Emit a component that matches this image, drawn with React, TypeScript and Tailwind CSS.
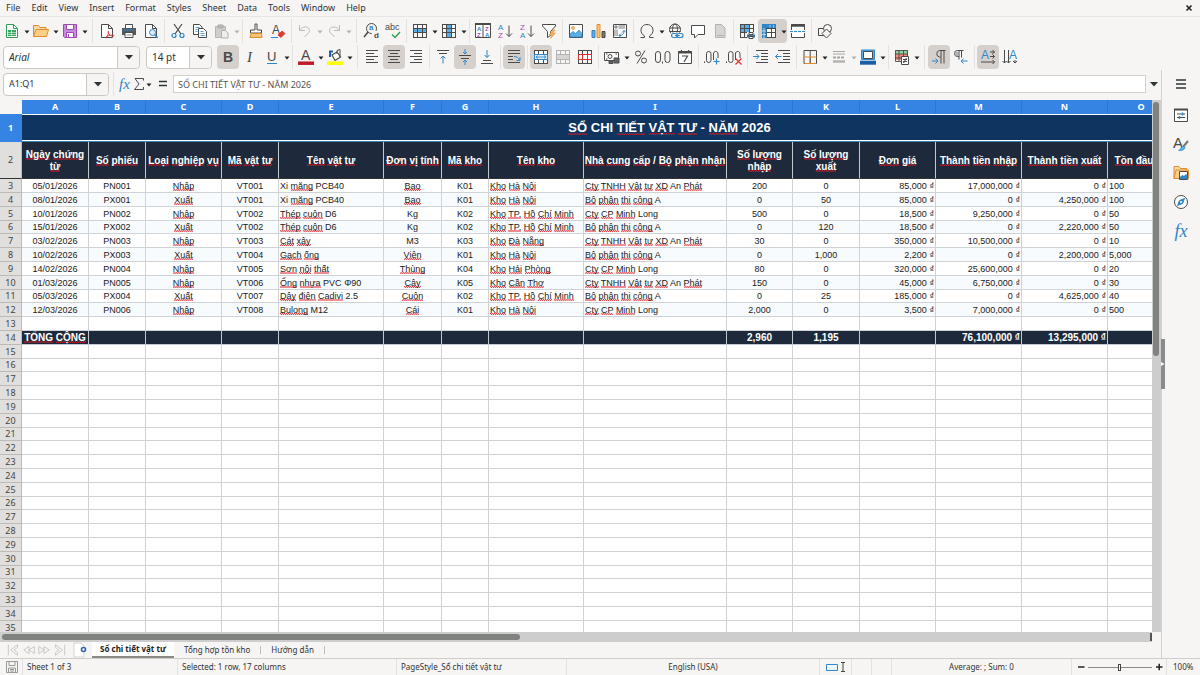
import { Fragment, ReactNode, useState } from "react";

const INK = "#4a4a4a";
const BLUE = "#2f86c8";

const menus = ["File", "Edit", "View", "Insert", "Format", "Styles", "Sheet", "Data", "Tools", "Window", "Help"];

const columns = [
  { letter: "A", width: "w-[67px]", title: "Ngày chứng từ", align: "text-center" },
  { letter: "B", width: "w-[57px]", title: "Số phiếu", align: "text-center" },
  { letter: "C", width: "w-[76px]", title: "Loại nghiệp vụ", align: "text-center" },
  { letter: "D", width: "w-[57px]", title: "Mã vật tư", align: "text-center" },
  { letter: "E", width: "w-[105px]", title: "Tên vật tư", align: "text-left" },
  { letter: "F", width: "w-[58px]", title: "Đơn vị tính", align: "text-center" },
  { letter: "G", width: "w-[47px]", title: "Mã kho", align: "text-center" },
  { letter: "H", width: "w-[95px]", title: "Tên kho", align: "text-left" },
  { letter: "I", width: "w-[143px]", title: "Nhà cung cấp / Bộ phận nhận", align: "text-left" },
  { letter: "J", width: "w-[66px]", title: "Số lượng nhập", align: "text-center" },
  { letter: "K", width: "w-[67px]", title: "Số lượng xuất", align: "text-center" },
  { letter: "L", width: "w-[76px]", title: "Đơn giá", align: "text-right" },
  { letter: "M", width: "w-[86px]", title: "Thành tiền nhập", align: "text-right" },
  { letter: "N", width: "w-[86px]", title: "Thành tiền xuất", align: "text-right" },
  { letter: "O", width: "w-[67px]", title: "Tồn đầu kỳ", align: "text-left" },
  { letter: "P", width: "w-[71px]", title: "", align: "text-left" },
  { letter: "Q", width: "w-[71px]", title: "", align: "text-left" },
];

const records = [
  ["05/01/2026", "PN001", "Nhập", "VT001", "Xi măng PCB40", "Bao", "K01", "Kho Hà Nội", "Cty TNHH Vật tư XD An Phát", "200", "0", "85,000 ₫", "17,000,000 ₫", "0 ₫", "100"],
  ["08/01/2026", "PX001", "Xuất", "VT001", "Xi măng PCB40", "Bao", "K01", "Kho Hà Nội", "Bộ phận thi công A", "0", "50", "85,000 ₫", "0 ₫", "4,250,000 ₫", "100"],
  ["10/01/2026", "PN002", "Nhập", "VT002", "Thép cuộn D6", "Kg", "K02", "Kho TP. Hồ Chí Minh", "Cty CP Minh Long", "500", "0", "18,500 ₫", "9,250,000 ₫", "0 ₫", "50"],
  ["15/01/2026", "PX002", "Xuất", "VT002", "Thép cuộn D6", "Kg", "K02", "Kho TP. Hồ Chí Minh", "Bộ phận thi công A", "0", "120", "18,500 ₫", "0 ₫", "2,220,000 ₫", "50"],
  ["03/02/2026", "PN003", "Nhập", "VT003", "Cát xây", "M3", "K03", "Kho Đà Nẵng", "Cty TNHH Vật tư XD An Phát", "30", "0", "350,000 ₫", "10,500,000 ₫", "0 ₫", "10"],
  ["10/02/2026", "PX003", "Xuất", "VT004", "Gạch ống", "Viên", "K01", "Kho Hà Nội", "Bộ phận thi công A", "0", "1,000", "2,200 ₫", "0 ₫", "2,200,000 ₫", "5,000"],
  ["14/02/2026", "PN004", "Nhập", "VT005", "Sơn nội thất", "Thùng", "K04", "Kho Hải Phòng", "Cty CP Minh Long", "80", "0", "320,000 ₫", "25,600,000 ₫", "0 ₫", "20"],
  ["01/03/2026", "PN005", "Nhập", "VT006", "Ống nhựa PVC Φ90", "Cây", "K05", "Kho Cần Thơ", "Cty TNHH Vật tư XD An Phát", "150", "0", "45,000 ₫", "6,750,000 ₫", "0 ₫", "30"],
  ["05/03/2026", "PX004", "Xuất", "VT007", "Dây điện Cadivi 2.5", "Cuộn", "K02", "Kho TP. Hồ Chí Minh", "Bộ phận thi công A", "0", "25", "185,000 ₫", "0 ₫", "4,625,000 ₫", "40"],
  ["12/03/2026", "PN006", "Nhập", "VT008", "Bulong M12", "Cái", "K01", "Kho Hà Nội", "Cty CP Minh Long", "2,000", "0", "3,500 ₫", "7,000,000 ₫", "0 ₫", "500"],
];

const totals = ["TỔNG CỘNG", "", "", "", "", "", "", "", "", "2,960", "1,195", "", "76,100,000 ₫", "13,295,000 ₫", ""];

const knownWords = ["", "Xi", "An", "A", "Long", "Kg", "PVC", "CHI", "-", "/", "₫"];

// Words missing from the dictionary get a red zigzag under them
const Spelled = ({ text }: { text: string }) => (
  <>
    {text.split(" ").map((word, i) => {
      const ok = knownWords.includes(word) || /\d/.test(word);
      return (
        <Fragment key={i}>
          {i > 0 && " "}
          {ok ? (
            word
          ) : (
            <span className="bg-[repeating-conic-gradient(#e01b24cc_0_25%,#e01b2430_0_50%)] bg-[length:2px_2px] bg-bottom bg-repeat-x">
              {word}
            </span>
          )}
        </Fragment>
      );
    })}
  </>
);

const Icon = ({ children }: { children: ReactNode }) => (
  <svg viewBox="0 0 16 16" className="h-4 w-4 shrink-0 overflow-visible" fill="none" stroke={INK} aria-hidden="true">
    {children}
  </svg>
);

const Tool = ({ label, on, children }: { label: string; on?: boolean; children: ReactNode }) => (
  <button
    type="button"
    aria-label={label}
    title={label}
    className={`flex h-6 w-[22px] shrink-0 items-center justify-center rounded ${on ? "bg-[#d5d0cc]" : ""}`}
  >
    <Icon>{children}</Icon>
  </button>
);

const Arrow = ({ label, dim }: { label: string; dim?: boolean }) => (
  <button type="button" aria-label={label} className="flex h-6 w-[7px] shrink-0 items-center justify-center">
    <svg viewBox="0 0 6 4" className="mt-[2px] h-1 w-[6px] shrink-0" aria-hidden="true">
      <path d="M0.5 0.5h5L3 3.5z" fill={dim ? "#b0b0b0" : "#222"} />
    </svg>
  </button>
);

const Sep = ({ wide }: { wide?: boolean }) => (
  <span className={`flex h-full max-h-6 shrink-0 justify-center ${wide ? "w-2" : "w-[5px]"}`}>
    <span className="h-full w-px bg-[#e4e2e0]" />
  </span>
);

const T = ({ x, y, size, fill = INK, weight, italic, font = "Liberation Sans, sans-serif", children }: any) => (
  <text
    x={x}
    y={y}
    fontSize={size}
    fill={fill}
    stroke="none"
    fontWeight={weight}
    fontStyle={italic ? "italic" : "normal"}
    fontFamily={font}
  >
    {children}
  </text>
);

const Grid = ({ color = INK }: { color?: string }) => (
  <path d="M1 1.5h14M1 5.5h14M1 9.5h14M1 14.5h14M1.5 1v14M5.5 1v14M10.5 1v14M14.5 1v14" stroke={color} />
);

const Lines = ({ d }: { d: string }) => <path d={d} stroke={INK} />;

const StandardBar = () => (
  <div className="flex h-[27px] shrink-0 items-center overflow-hidden pl-px" role="toolbar" aria-label="Standard">
    <Tool label="New">
      <path d="M2.5 1.5h7l4 4v9h-11z" fill="#fff" stroke="#2f9e57" />
      <path d="M9.5 1.5v4h4" stroke="#2f9e57" />
      <path d="M4 7h8v6H4z" fill="#3aa760" stroke="none" />
      <path d="M4 9.5h8M4 11.5h8M7.5 7v6" stroke="#d9f2e1" strokeWidth=".7" />
    </Tool>
    <Arrow label="New options" />
    <Tool label="Open">
      <path d="M.5 13.5V2.5h5l1.500 2h6v2" fill="#f7d9a8" stroke="#e08d2c" />
      <path d="M.5 13.5l2.500-7h12.500l-2 7z" fill="#fbcf86" stroke="#e08d2c" />
    </Tool>
    <Arrow label="Open options" />
    <Tool label="Save">
      <path d="M1.5 1.5h13v13h-12l-1-1z" fill="#c98bdb" stroke="#9b47b5" />
      <path d="M4.5 1.5h7v5h-7z" fill="#fff" stroke="#9b47b5" />
      <path d="M4.5 9.5h7v5h-7z" fill="#fff" stroke="#9b47b5" />
      <path d="M6.5 11v3" stroke="#9b47b5" />
    </Tool>
    <Arrow label="Save options" />
    <Sep wide />
    <Tool label="Export as PDF">
      <path d="M2.5 1.5h7l4 4v9h-11z" fill="#fff" />
      <path d="M9.5 1.5v4h4" />
      <path
        d="M7 14.5c2-2 3-5 2.500-6s-1 .5.5 2.500 3 2.500 4.500 2-1-1.200-3-.8-4 1.300-4.500 2.300z"
        stroke="#e03131"
        strokeWidth=".9"
      />
    </Tool>
    <Tool label="Print">
      <path d="M4.5 5V1.5h7V5" fill="#fff" />
      <path d="M1 5h14v7H1z" fill="#55595c" stroke="none" />
      <path d="M3 7h10" stroke={BLUE} />
      <path d="M4 9.5h8v5H4z" fill="#fff" />
      <path d="M5.5 12h5" stroke="#888" />
    </Tool>
    <Tool label="Print preview">
      <path d="M2.5 1.5h7l4 4v9h-11z" fill="#fff" />
      <path d="M9.5 1.5v4h4" />
      <circle cx="9.500" cy="9.500" r="3" fill="#d8ecfa" stroke={BLUE} />
      <path d="M11.7 11.7l3 3" stroke={BLUE} strokeWidth="1.5" />
    </Tool>
    <Sep />
    <Tool label="Cut">
      <path d="M4 1l7 10M12 1L5 11" strokeWidth="1.2" />
      <circle cx="4" cy="12.5" r="2" stroke={BLUE} strokeWidth="1.2" />
      <circle cx="12" cy="12.5" r="2" stroke={BLUE} strokeWidth="1.2" />
    </Tool>
    <Tool label="Copy">
      <path d="M1.5 1.5h6L10 4v7.5H1.500z" fill="#fff" />
      <path d="M3.5 4.5h4M3.5 6.5h2M3.5 8.5h2" stroke={BLUE} strokeWidth=".8" />
      <path d="M6.5 5.5h5l3 3v6h-8z" fill="#fff" />
      <path d="M8.5 8.5h3M8.5 10.5h4M8.5 12.5h4" stroke={BLUE} strokeWidth=".8" />
    </Tool>
    <Tool label="Paste">
      <path d="M1.5 3.5h10v11h-10z" fill="#cfcecd" stroke="#b8b6b4" />
      <path d="M4 2h5v3H4z" fill="#bbb" stroke="#aaa" />
      <path d="M7.5 7.5h4L14 10v5H7.500z" fill="#eee" stroke="#b0b0b0" />
    </Tool>
    <Arrow label="Paste options" dim />
    <Sep />
    <Tool label="Clone formatting">
      <path d="M7 1h2v6h4.500v3h-11V7H7z" fill="#fff" />
      <path d="M3 10.5h10.500l.5 4H2z" fill="#fbc577" stroke="#e08d2c" />
    </Tool>
    <Tool label="Clear formatting">
      <T x={2} y={11} size={12}>A</T>
      <path d="M1 14.5h7" stroke={BLUE} />
      <path d="M8 12l4-4 3 2.500-4 4z" fill="#e23b3b" stroke="#c92a2a" strokeWidth=".7" />
    </Tool>
    <Sep />
    <Tool label="Undo">
      <path d="M2.5 2v5.500H8M2.5 7.500C5 3 12 2.500 12.500 7.500c0 2.500-2.500 4-5 6" stroke="#bdbbb9" />
    </Tool>
    <Arrow label="Undo options" dim />
    <Tool label="Redo">
      <path d="M13.5 2v5.500H8M13.5 7.500C11 3 4 2.500 3.500 7.500c0 2.500 2.500 4 5 6" stroke="#bdbbb9" />
    </Tool>
    <Arrow label="Redo options" dim />
    <Sep wide />
    <Tool label="Find and replace">
      <circle cx="8.500" cy="5.500" r="5" />
      <path d="M5 9L1 14" strokeWidth="1.5" />
      <path d="M9 8h7v8H9z" fill="#f6f5f4" stroke="none" />
      <T x={6} y={7} size={8} fill={BLUE} weight={700}>a</T>
      <T x={11} y={15} size={8} weight={700}>d</T>
    </Tool>
    <Tool label="Spelling">
      <T x={0} y={7} size={9}>abc</T>
      <path d="M7 11.500l3 3L15 9" stroke="#2f9e57" strokeWidth="1.400" />
    </Tool>
    <Sep />
    <Tool label="Row">
      <path d="M1 5h14v5H1z" fill="#5aaee8" stroke="none" />
      <Grid />
    </Tool>
    <Arrow label="Row options" />
    <Tool label="Column">
      <path d="M5 1h5v14H5z" fill="#5aaee8" stroke="none" />
      <Grid />
    </Tool>
    <Arrow label="Column options" />
    <Sep />
    <Tool label="Sort">
      <path d="M.5.5h15v14H.5z" fill="#fff" />
      <path d="M0 1h16" strokeWidth="2" />
      <path d="M8 2v13" />
      <T x={2} y={8} size={6} fill={BLUE} weight={700}>A</T>
      <T x={2} y={14} size={6} fill="#b244b8" weight={700}>Z</T>
      <T x={10} y={8} size={6} fill="#b244b8" weight={700}>Z</T>
      <T x={10} y={14} size={6} fill={BLUE} weight={700}>A</T>
    </Tool>
    <Tool label="Sort ascending">
      <T x={1} y={7} size={8} fill={BLUE}>A</T>
      <T x={1} y={15} size={8} fill="#b244b8">Z</T>
      <path d="M12 2.5v11M9 10.5l3 3 3-3" />
    </Tool>
    <Tool label="Sort descending">
      <T x={1} y={7} size={8} fill="#b244b8">Z</T>
      <T x={1} y={15} size={8} fill={BLUE}>A</T>
      <path d="M12 2.5v11M9 10.5l3 3 3-3" />
    </Tool>
    <Tool label="AutoFilter">
      <path d="M1.5 1.5h13V3L9.500 8.500v4l-3 2v-6L1.500 3z" fill="#fff" />
      <path d="M12 7l-4 5h3l-1.500 3.500L14.500 10h-3L14 7z" fill="#f9b75c" stroke="#e08d2c" strokeWidth=".6" />
    </Tool>
    <Sep />
    <Tool label="Insert image">
      <path d="M1.5 1.5h13v13h-13z" fill="#fff" />
      <circle cx="5" cy="5" r="1.500" fill="#fbc577" stroke="#e08d2c" strokeWidth=".7" />
      <path d="M2 14v-3l3-2.500 2.500 2L11 7l3 3.500V14z" fill="#5aaee8" stroke={BLUE} strokeWidth=".7" />
    </Tool>
    <Tool label="Insert chart">
      <path d="M2 7.500h3v7H2z" fill="#5aaee8" stroke={BLUE} />
      <path d="M7 1.500h3v13H7z" fill="#fbc577" stroke="#e08d2c" />
      <path d="M12 8.500h3v6h-3z" fill="#777" />
    </Tool>
    <Tool label="Pivot table">
      <path d="M1.5 1.5h13v13h-13z" fill="#fff" />
      <path d="M3 3h2v2H3zM6.500 3H13M6.500 5H13M3 6.500V13M5 6.500V13" stroke="#777" />
      <path d="M7 12.500c3 .5 5-1.500 5-5M10 9.500l2-2 2 2M9 10.500l-2 2 2 2" stroke={BLUE} />
    </Tool>
    <Sep />
    <Tool label="Special character">
      <path d="M1.5 14.500h4V13C3 11.500 2 9.500 2 7.200 2 4 4.500 1.500 8 1.500S14 4 14 7.200c0 2.300-1 4.300-3.500 5.800v1.500h4" />
    </Tool>
    <Arrow label="Special character options" />
    <Tool label="Hyperlink">
      <circle cx="7" cy="6.500" r="5.500" />
      <ellipse cx="7" cy="6.500" rx="2.500" ry="5.500" />
      <path d="M1.5 5h11M1.500 8.500h11" />
      <path d="M3 9.500h13V16H3z" fill="#f6f5f4" stroke="none" />
      <rect x="3.500" y="10.500" width="6" height="4" rx="2" stroke={BLUE} strokeWidth="1.200" />
      <rect x="9" y="10.500" width="6" height="4" rx="2" stroke={BLUE} strokeWidth="1.200" />
      <path d="M7 12.500h5" stroke={BLUE} />
    </Tool>
    <Tool label="Comment">
      <path d="M1.5 2.500h13v9H8L4.500 15v-3.500h-3z" fill="#fff" />
    </Tool>
    <Tool label="Headers and footers">
      <path d="M3.5 1.500h6L13 5v9.500H3.500z" fill="#d6d5d4" stroke="#b5b3b1" />
      <path d="M5 12.500h6.500" stroke="#b5b3b1" />
    </Tool>
    <Sep />
    <Tool label="Print area">
      <path d="M1 1h9v8H1z" fill="#5aaee8" stroke="none" />
      <Grid />
      <path d="M8 9h8v7H8z" fill="#f6f5f4" stroke="none" />
      <path d="M10 9.500h4v2h-4z" fill="#fff" />
      <path d="M8 11.500h8v3H8z" fill="#4b6f8c" stroke="none" />
      <path d="M10 13.500h4v2h-4z" fill="#fff" />
    </Tool>
    <div className="flex rounded bg-[#d5d0cc]">
      <Tool label="Freeze rows and columns">
        <path d="M1.5 1.500h13v13h-13z" fill="#fff" />
        <Grid />
        <path d="M1 1h4.500v14H1zM1 1h14v4H1z" fill={BLUE} stroke="none" />
        <path d="M3 5v10M9 2v2.500M12.500 2v2.500M1 8h4M1 11.500h4" stroke="#cfe6f7" strokeWidth=".8" />
      </Tool>
      <Arrow label="Freeze options" />
    </div>
    <Tool label="Split window">
      <path d="M1.5 7V1.500h13V7M1.500 10v4.500h13V10" fill="#fff" />
      <path d="M1 2.500h14" strokeWidth="2.500" />
      <path d="M0 8.500h16" stroke={BLUE} strokeDasharray="3 1" />
    </Tool>
    <Sep />
    <Tool label="Show draw functions">
      <path d="M1.5 5.500h8v7h-8z" fill="#f6f5f4" />
      <circle cx="10.500" cy="5.500" r="4" fill="#f6f5f4" />
      <path d="M9.500 6l4.500 4.500L9.500 15 5 10.500z" fill="#f6f5f4" />
    </Tool>
  </div>
);

const Combo = ({ label, value, className, textClass }: { label: string; value: string; className: string; textClass: string }) => (
  <div className={`relative h-[23px] shrink-0 rounded border border-[#cdc7c2] bg-white ${className}`}>
    <select
      aria-label={label}
      defaultValue={value}
      className={`block h-full w-full appearance-none bg-transparent pl-[5px] leading-[20px] text-[#2e3436] outline-none ${textClass}`}
    >
      <option>{value}</option>
    </select>
    <span className="pointer-events-none absolute inset-y-0 right-0 flex w-[22px] items-center justify-center rounded-r border-l border-[#cdc7c2] bg-[#f6f5f4]">
      <svg viewBox="0 0 8 5" className="h-[5px] w-2" aria-hidden="true">
        <path d="M0 0h8L4 4.500z" fill="#2e3436" />
      </svg>
    </span>
  </div>
);

const FormattingBar = () => (
  <div className="flex h-[26px] shrink-0 items-center overflow-hidden pl-[3px]" role="toolbar" aria-label="Formatting">
    <Combo label="Font name" value="Arial" className="w-[137px]" textClass="text-[10px] italic" />
    <Combo label="Font size" value="14 pt" className="mr-[5px] ml-[6px] w-[66px]" textClass="text-[10px]" />
    <Tool label="Bold" on>
      <T x={3} y={13} size={14} weight={700}>B</T>
    </Tool>
    <Tool label="Italic">
      <T x={5} y={13} size={15} italic font="Liberation Serif, serif">I</T>
    </Tool>
    <Tool label="Underline">
      <T x={3} y={12} size={13}>U</T>
      <path d="M3 14.500h10" stroke={BLUE} />
    </Tool>
    <Arrow label="Underline options" />
    <Sep />
    <Tool label="Font color">
      <T x={3} y={11} size={14}>A</T>
      <path d="M0 14.200h16" stroke="#c01c28" strokeWidth="3.500" />
    </Tool>
    <Arrow label="Font color options" />
    <Tool label="Background color">
      <path d="M3 8V2.500h3" stroke="#1c5fa8" strokeWidth="2" />
      <path d="M5 6l5-3 3.500 5L8 11.500z" fill="#fff" strokeWidth="1.200" />
      <path d="M10 5V1.500l3-1V8" />
      <path d="M0 14.200h16" stroke="#ffff00" strokeWidth="3.500" />
    </Tool>
    <Arrow label="Background color options" />
    <Sep wide />
    <Tool label="Align left">
      <Lines d="M2 1.500h12M2 4.500h8M2 7.500h12M2 10.500h8M2 13.500h12" />
    </Tool>
    <Tool label="Center horizontally" on>
      <Lines d="M2 1.500h12M4 4.500h8M2 7.500h12M4 10.500h8M2 13.500h12" />
    </Tool>
    <Tool label="Align right">
      <Lines d="M2 1.500h12M6 4.500h8M2 7.500h12M6 10.500h8M2 13.500h12" />
    </Tool>
    <Sep />
    <Tool label="Align top">
      <Lines d="M2 1.500h12M4 4.500h8" />
      <path d="M8 14.500V7M5.500 9.500L8 7l2.500 2.500" stroke={BLUE} />
    </Tool>
    <Tool label="Center vertically" on>
      <Lines d="M2 6.500h12M4 9.500h8" />
      <path d="M8 0v5M6 3l2 2 2-2M8 16v-5M6 13l2-2 2 2" stroke={BLUE} />
    </Tool>
    <Tool label="Align bottom">
      <Lines d="M4 11.500h8M2 14.500h12" />
      <path d="M8 1v7.500M5.500 6L8 8.500 10.500 6" stroke={BLUE} />
    </Tool>
    <Sep />
    <Tool label="Wrap text" on>
      <Lines d="M2 1.500h12M2 4.500h12M2 7.500h5M2 10.500h5M2 13.500h12" />
      <path d="M8 7.500c3 0 4 1 5.500 3.500M10.500 11.500H14V8" stroke={BLUE} />
    </Tool>
    <Sep />
    <Tool label="Merge and center cells" on>
      <path d="M1 1h14v14H1z" fill="#fff" stroke="none" />
      <Grid />
      <path d="M1.500 5.500h13v5h-13z" fill="#d8ecfa" stroke={BLUE} />
      <path d="M3 8h10M5 6.500L3 8l2 1.500M11 6.500L13 8l-2 1.500" stroke={BLUE} strokeWidth=".8" />
    </Tool>
    <Tool label="Merge cells">
      <Grid color="#b5b3b1" />
      <path d="M1.500 5.500h13v5h-13z" fill="#d6d5d4" stroke="#b5b3b1" />
    </Tool>
    <Tool label="Unmerge cells">
      <Grid />
      <path d="M1.500 5.500h13v5h-13zM5.500 5v5.500M10.500 5v5.500" fill="#fff" stroke="#e03131" />
    </Tool>
    <Sep />
    <Tool label="Format as currency">
      <path d="M.5 3.500h14v8H.5z" fill="#fff" />
      <circle cx="6" cy="7.500" r="2" />
      <path d="M2 5h1.500M11.500 5H13M2 10h1.500" />
      <path d="M10 9h5v5h-5zM5 12h4v2.500H5z" fill="#666" />
    </Tool>
    <Arrow label="Currency options" />
    <Tool label="Format as percent">
      <circle cx="5" cy="4.500" r="2.500" />
      <circle cx="11" cy="11.500" r="2.500" />
      <path d="M12 1.500l-8 13" />
    </Tool>
    <Tool label="Format as number">
      <rect x="0.500" y="2.500" width="5" height="11" rx="2.500" />
      <rect x="10" y="2.500" width="5" height="11" rx="2.500" />
      <path d="M7.500 12.500v2" />
    </Tool>
    <Tool label="Format as date">
      <path d="M1.500 2.500h13v12h-13z" fill="#fff" />
      <path d="M1 3.500h14" strokeWidth="2" />
      <path d="M4.500 1v2M11.500 1v2M5 7h5.500L7 13" strokeWidth="1.200" />
    </Tool>
    <Sep />
    <Tool label="Add decimal place">
      <path d="M.5 12.500V14" />
      <rect x="2.500" y="2.500" width="4.500" height="11" rx="2.200" />
      <path d="M9.500 11V5c0-3.500 4.500-3.500 4.500 0v4" />
      <path d="M12.500 9.500v6M9.500 12.500h6" stroke={BLUE} strokeWidth="1.200" />
    </Tool>
    <Tool label="Delete decimal place">
      <path d="M.5 12.500V14" />
      <rect x="2.500" y="2.500" width="4.500" height="11" rx="2.200" />
      <path d="M9.500 11V5c0-3.500 4.500-3.500 4.500 0v4" />
      <path d="M9.500 9.500l6 6M15.500 9.500l-6 6" stroke="#e03131" strokeWidth="1.200" />
    </Tool>
    <Sep />
    <Tool label="Increase indent">
      <Lines d="M3 1.500h12M8 4.500h7M8 7.500h7M8 10.500h7M3 13.500h12" />
      <path d="M0 7.500h6M3.500 5L6 7.500 3.500 10" stroke={BLUE} />
    </Tool>
    <Tool label="Decrease indent">
      <Lines d="M3 1.500h12M8 4.500h7M8 7.500h7M8 10.500h7M3 13.500h12" />
      <path d="M6.500 7.500h-6M3 5L.5 7.500 3 10" stroke={BLUE} />
    </Tool>
    <Sep />
    <Tool label="Borders">
      <path d="M2 1.500h12.500v13H2z" />
      <path d="M8.200 8v6M2.500 14.500H14" stroke="#e08d2c" />
      <path d="M8.200 1v13" />
      <path d="M2 8h12.500" stroke="#e08d2c" />
    </Tool>
    <Arrow label="Border options" />
    <Tool label="Border style">
      <path d="M2 2.500h12M2 5h12" stroke="#a8a6a4" />
      <path d="M2 8.500h12" stroke="#a8a6a4" strokeWidth="2" strokeDasharray="3 1" />
      <path d="M2 12.500h12" stroke="#b5b3b1" strokeWidth="2.500" />
    </Tool>
    <Arrow label="Border style options" dim />
    <Tool label="Border color">
      <path d="M1.500 1h13v9.500h-13z" fill="#5aaee8" stroke={BLUE} />
      <path d="M3.500 2.500h9v7h-9z" fill="#fff" stroke={INK} />
      <path d="M0 13.700h16" stroke="#1c5fa8" strokeWidth="4" />
    </Tool>
    <Arrow label="Border color options" />
    <Sep />
    <Tool label="Conditional formatting">
      <path d="M1 1h13v4H1z" fill="#8fd19e" stroke="none" />
      <path d="M1 5h13v6H1z" fill="#f28b82" stroke="none" />
      <path d="M1.500 1.500h12v11h-12zM1 5h13M1 9h12M5 1v11M9.500 1v11" strokeWidth=".9" />
      <path d="M7.500 7.500h7v8h-7z" fill="#fff" />
      <path d="M9 10.500h4M9 12.500h4M12.500 9l-3 5" />
    </Tool>
    <Arrow label="Conditional formatting options" />
    <Sep wide />
    <Tool label="Left-to-right" on>
      <path d="M14.500 1.500h-6a3.300 3.300 0 0 0 0 6.500h1M10 1.500v13M13 1.500v13" />
      <path d="M1 12h6M4.500 9.500L7 12l-2.500 2.500" stroke={BLUE} />
    </Tool>
    <Tool label="Right-to-left">
      <path d="M10.500 1.500h-6a3 3 0 0 0 0 6H6M6 1.500v9M8.500 1.500v7" />
      <path d="M2.500 3h3v4h-3z" fill="#aaa" stroke="none" />
      <path d="M14.500 12H8M10.500 9.500L8 12l2.500 2.500" stroke={BLUE} />
    </Tool>
    <Sep />
    <Tool label="Text direction left to right" on>
      <T x={1} y={10} size={12} fill={BLUE}>A</T>
      <path d="M10 3h4.500M10 7.500h4.500M12.500 1l2 2-2 2M12.500 5.500l2 2-2 2M1 13h13.500M12.500 11l2 2-2 2" />
    </Tool>
    <Tool label="Text direction top to bottom">
      <T x={7} y={10} size={12} fill={BLUE}>A</T>
      <path d="M2.500 1v13M6.500 1v13M13 11v3M.5 12l2 2 2-2M4.500 12l2 2 2-2M11 12l2 2 2-2" />
    </Tool>
  </div>
);

const FormulaBar = () => (
  <div className="flex h-7 shrink-0 items-center pl-[3px] text-[#2e3436]">
    <Combo label="Name box" value="A1:Q1" className="w-[106px]" textClass="text-[9px]" />
    <Sep wide />
    <button
      type="button"
      aria-label="Function wizard"
      className="ml-[2px] w-[14px] text-left font-['Liberation_Serif',serif] text-[15px] leading-[20px] text-[#2f86c8] italic"
    >
      fx
    </button>
    <button type="button" aria-label="Select function" className="flex w-3 justify-center">
      <svg viewBox="0 0 10 12" className="h-3 w-[10px]" fill="none" stroke={INK} aria-hidden="true">
        <path d="M9.500 2.500V.5H1L5 6l-4.500 5.500h9V9" />
      </svg>
    </button>
    <Arrow label="Function options" />
    <button type="button" aria-label="Formula" className="mr-1 ml-[5px] flex w-3 justify-center">
      <svg viewBox="0 0 10 8" className="h-2 w-[10px]" aria-hidden="true">
        <path d="M1 1.500h8M1 5.500h8" stroke="#2e3436" strokeWidth="1.500" />
      </svg>
    </button>
    <input
      aria-label="Input line"
      defaultValue="SỔ CHI TIẾT VẬT TƯ - NĂM 2026"
      className="h-[18px] min-w-0 flex-1 border border-[#d5d0cc] bg-white px-1 text-[9px] text-[#555] outline-none"
    />
    <button type="button" aria-label="Expand formula bar" className="flex w-[15px] justify-center">
      <svg viewBox="0 0 8 5" className="h-[5px] w-2" aria-hidden="true">
        <path d="M0 0h8L4 4.500z" fill="#2e3436" />
      </svg>
    </button>
  </div>
);

// Row height averages a little under 14px, so every fifth row is one pixel shorter
const rowHeight = (n: number) => (n % 5 === 1 ? "h-[13px]" : "h-[14px]");

const RowHead = ({ n }: { n: number }) => (
  <th
    scope="row"
    className={`border-r border-b p-0 font-['Noto_Sans',sans-serif] text-[9px] leading-3 ${
      n === 1
        ? "border-[#3584e4] bg-[#3584e4] font-bold text-white"
        : `border-[#bdbab7] bg-[#e1dfdd] font-normal text-[#444] ${n === 2 ? "border-b-[#333]" : ""}`
    }`}
  >
    {n}
  </th>
);

const Sheet = () => (
  <table className="w-[1317px] table-fixed border-separate border-spacing-0 font-['Liberation_Sans',Arial,sans-serif] text-[9px] leading-3 text-[#1a1a1a]">
    <thead>
      <tr className="h-[14px]">
        <td className="w-[22px] bg-[#f6f5f4] p-0" />
        {columns.map((c) => (
          <th
            key={c.letter}
            scope="col"
            className={`border-r border-[#2a76d2] bg-[#3584e4] p-0 font-['Noto_Sans',sans-serif] text-[9px] leading-3 font-bold text-white ${c.width}`}
          >
            {c.letter}
          </th>
        ))}
      </tr>
    </thead>
    <tbody>
      <tr className="h-7">
        <RowHead n={1} />
        <th
          colSpan={17}
          className="border-b border-[#3b82b8] bg-[#0f3460] p-0 text-[13px] leading-4 text-white shadow-[inset_0_1px_#fff,inset_0_-1px_#fff]"
        >
          <Spelled text="SỔ CHI TIẾT VẬT TƯ - NĂM 2026" />
        </th>
      </tr>
      <tr className="h-[37px]">
        <RowHead n={2} />
        {columns.map((c) => (
          <th
            key={c.letter}
            className="border-r border-b border-[#c3c9d1] border-b-[#333] bg-[#1e293b] p-0 pt-px text-[10px] leading-3 text-white"
          >
            <Spelled text={c.title} />
          </th>
        ))}
      </tr>
      {records.map((record, i) => (
        <tr key={i} className={`${rowHeight(i + 3)} ${i % 2 ? "bg-[#f8fbfd]" : "bg-white"}`}>
          <RowHead n={i + 3} />
          {columns.map((c, j) => (
            <td key={c.letter} className={`overflow-hidden border-r border-b border-[#d0d3d6] px-px py-0 whitespace-nowrap ${c.align}`}>
              <Spelled text={record[j] ?? ""} />
            </td>
          ))}
        </tr>
      ))}
      <tr className="h-[14px] bg-white">
        <RowHead n={13} />
        {columns.map((c) => (
          <td key={c.letter} className="border-r border-b border-[#d0d3d6] p-0" />
        ))}
      </tr>
      <tr className="h-[14px] bg-[#1e293b] text-[10px] text-white">
        <RowHead n={14} />
        {columns.map((c, j) => (
          <td
            key={c.letter}
            className={`border-r border-b border-[#c3c9d1] px-px py-0 font-bold whitespace-nowrap ${j === 0 ? "text-center" : c.align}`}
          >
            <Spelled text={totals[j] ?? ""} />
          </td>
        ))}
      </tr>
      {Array.from({ length: 21 }, (_, i) => i + 15).map((n) => (
        <tr key={n} className={`${rowHeight(n)} bg-white`}>
          <RowHead n={n} />
          {columns.map((c) => (
            <td key={c.letter} className="border-r border-b border-[#d0d3d6] p-0" />
          ))}
        </tr>
      ))}
    </tbody>
  </table>
);

const SideBar = () => (
  <div className="flex w-[39px] shrink-0 flex-col items-center border-l border-[#d5d0cc]">
    <button type="button" aria-label="Sidebar settings" className="flex h-7 w-full items-center justify-center">
      <svg viewBox="0 0 10 10" className="h-[10px] w-[10px]" aria-hidden="true">
        <path d="M0 1h10M0 5h10M0 9h10" stroke="#2e3436" strokeWidth="1.300" />
      </svg>
    </button>
    <div className="mt-[5px] flex flex-col gap-[5px]">
      <Tool label="Properties">
        <path d="M1.500 2.500h13v12h-13z" fill="#fff" />
        <path d="M1 2.500h14" strokeWidth="2" />
        <path d="M4 7h8M4 10.500h8" />
        <path d="M9.500 5.500v3M6.500 9v3" stroke={BLUE} strokeWidth="1.500" />
      </Tool>
      <Tool label="Styles">
        <T x={0} y={12} size={15}>A</T>
        <path d="M15 5l-5 6" strokeWidth="2" stroke="#777" />
        <path d="M10.500 10l1.500 1.500c0 2-3 3.500-6.500 3 2-.5 2-4 5-4.500z" fill="#5aaee8" stroke={BLUE} strokeWidth=".7" />
      </Tool>
      <Tool label="Gallery">
        <path d="M1 13.500v-12h5l1.500 2h6V6" fill="#f7d9a8" stroke="#e08d2c" />
        <path d="M1 13.500L3 5h12.500v8.500z" fill="#fbcf86" stroke="#e08d2c" />
        <path d="M6.500 6.500h8v8h-8z" fill="#fff" />
        <path d="M7 14v-2l2.500-2 1.500 1 2-2 1.500 2v3z" fill={BLUE} stroke="none" />
      </Tool>
      <Tool label="Navigator">
        <circle cx="8" cy="8" r="6.500" fill="#fff" />
        <path d="M11.500 4.500l-2 5-5 2 2-5z" fill={BLUE} stroke={BLUE} />
        <circle cx="8" cy="8" r="1" fill="#fff" stroke="none" />
      </Tool>
      <button
        type="button"
        aria-label="Functions"
        className="h-6 font-['Liberation_Serif',serif] text-[18px] leading-6 text-[#2f86c8] italic"
      >
        fx
      </button>
    </div>
  </div>
);

const tabs = ["Sổ chi tiết vật tư", "Tổng hợp tồn kho", "Hướng dẫn"];

const navButtons = [
  { label: "First sheet", d: "M1.500 2v12M12 2L4 8l8 6v-3L8 8l4-3z" },
  { label: "Previous sheet", d: "M8 4L2 8l6 4zM14 4L8 8l6 4z" },
  { label: "Next sheet", d: "M2 4l6 4-6 4zM8 4l6 4-6 4z" },
  { label: "Last sheet", d: "M14.500 2v12M4 2l8 6-8 6v-3l4-3-4-3z" },
];

const SheetTabs = () => {
  const [active, setActive] = useState(0);

  return (
    <div className="flex h-4 shrink-0 items-stretch text-[8px] leading-[14px] text-[#333]">
      <div className="ml-[6px] flex items-center">
        {navButtons.map((b) => (
          <button key={b.label} type="button" aria-label={b.label} className="flex w-[15px] justify-center">
            <svg viewBox="0 0 16 16" className="h-[14px] w-[14px]" fill="none" stroke="#c4c2c0" aria-hidden="true">
              <path d={b.d} />
            </svg>
          </button>
        ))}
      </div>
      <button type="button" aria-label="Add sheet" className="ml-[7px] flex w-[19px] items-center">
        <svg viewBox="0 0 14 16" className="h-4 w-[14px]" fill="none" aria-hidden="true">
          <path d="M1 1h7l3 3v11H1z" fill="#fff" stroke="#d5d3d1" />
          <circle cx="10.500" cy="7.500" r="2" fill="#fff" stroke="#2c62b0" strokeWidth="1.600" />
        </svg>
      </button>
      <div role="tablist" className="flex">
        {tabs.map((tab, i) => (
          <Fragment key={tab}>
            <button
              type="button"
              role="tab"
              aria-selected={active === i}
              onClick={() => setActive(i)}
              className={active === i ? "w-[82px] border-b-2 border-[#8b8b85] bg-white font-bold text-[#222]" : "px-[10px]"}
            >
              {tab}
            </button>
            {i > 0 && <span className="my-1 w-px bg-[#bbb]" />}
          </Fragment>
        ))}
      </div>
    </div>
  );
};

const StatusBar = () => (
  <div className="flex h-[17px] shrink-0 items-center border-t border-[#cfccc9] text-[8px] leading-4 text-[#333]">
    <span className="flex w-5 shrink-0 justify-center pl-1">
      <svg viewBox="0 0 12 12" className="h-3 w-3" fill="none" stroke="#999" aria-hidden="true">
        <path d="M.5.5h11v11H.5zM3 .5v4h6v-4M2.500 11V7h7v4M4 8.500h4M4 10h4" />
      </svg>
    </span>
    <Sep />
    <span className="w-[150px] shrink-0 pl-[2px]">Sheet 1 of 3</span>
    <Sep />
    <span className="w-[214px] shrink-0 pl-[2px]">Selected: 1 row, 17 columns</span>
    <Sep />
    <span className="w-[165px] shrink-0 pl-[2px]">PageStyle_Sổ chi tiết vật tư</span>
    <Sep />
    <span className="flex-1 text-center">English (USA)</span>
    <Sep />
    <span className="flex w-[27px] shrink-0 items-center justify-center">
      <svg viewBox="0 0 20 12" className="h-3 w-5 shrink-0" fill="none" aria-hidden="true">
        <path d="M.5 3.500h11v6H.5z" fill="#eef7fd" stroke={BLUE} />
        <path d="M15 1.500h4M15 10.500h4M17 1.500v9" stroke="#444" />
      </svg>
    </span>
    <Sep />
    <span className="w-[15px] shrink-0" />
    <Sep />
    <span className="w-[15px] shrink-0" />
    <Sep />
    <span className="w-[175px] shrink-0 text-center">Average: ; Sum: 0</span>
    <Sep />
    <button type="button" aria-label="Zoom out" className="flex w-[14px] shrink-0 justify-center">
      <svg viewBox="0 0 8 8" className="h-2 w-2" aria-hidden="true">
        <path d="M1 4h6.500" stroke="#222" strokeWidth="1.500" />
      </svg>
    </button>
    <input
      type="range"
      aria-label="Zoom"
      min={0}
      max={100}
      defaultValue={49}
      className="h-[9px] w-16 shrink-0 appearance-none bg-transparent [&::-webkit-slider-runnable-track]:h-px [&::-webkit-slider-runnable-track]:bg-[#8b8b85] [&::-webkit-slider-thumb]:-mt-[3px] [&::-webkit-slider-thumb]:h-[7px] [&::-webkit-slider-thumb]:w-[3px] [&::-webkit-slider-thumb]:appearance-none [&::-webkit-slider-thumb]:border [&::-webkit-slider-thumb]:border-[#444] [&::-webkit-slider-thumb]:bg-white"
    />
    <button type="button" aria-label="Zoom in" className="flex w-[14px] shrink-0 justify-center">
      <svg viewBox="0 0 8 8" className="h-2 w-2" aria-hidden="true">
        <path d="M1 4h6.500M4.200.8v6.500" stroke="#222" strokeWidth="1.500" />
      </svg>
    </button>
    <span className="w-[34px] shrink-0 border-l border-[#e4e2e0] pl-[6px]">100%</span>
  </div>
);

const App = () => {
  return (
    <div className="flex h-screen flex-col overflow-hidden bg-[#f6f5f4] font-['Noto_Sans',sans-serif]">
      <div className="flex h-[17px] shrink-0 items-center border-b border-[#e8e6e4] pr-[7px] text-[9px] leading-4 text-[#2e3436]">
        <nav className="flex gap-px pl-px" aria-label="Main menu">
          {menus.map((menu) => (
            <button key={menu} type="button" className="px-[5px]">
              {menu}
            </button>
          ))}
        </nav>
        <button type="button" aria-label="Close document" className="ml-auto">
          <svg viewBox="0 0 8 8" className="h-2 w-2" aria-hidden="true">
            <path d="M1.500 1.500l5 5M6.500 1.500l-5 5" stroke="#222" strokeWidth="1.600" />
          </svg>
        </button>
      </div>
      <StandardBar />
      <FormattingBar />
      <div className="flex min-h-0 flex-1">
        <div className="flex min-w-0 flex-1 flex-col">
          <FormulaBar />
          <div className="mt-[2px] flex min-h-0 flex-1">
            <div className="min-w-0 flex-1 overflow-hidden">
              <Sheet />
            </div>
            <div className="w-[9px] shrink-0 bg-[#cdcdcd] pt-[2px] pl-px">
              <div className="h-[48%] w-[6px] rounded bg-[#80827f]" />
            </div>
          </div>
          <div className="mr-[9px] flex h-[10px] shrink-0 items-center justify-between bg-[#cdcdcd] pl-[2px]">
            <div className="h-[6px] w-[45%] rounded bg-[#80827f]" />
            <div className="h-2 w-[2px] bg-[#555]" />
          </div>
          <SheetTabs />
        </div>
        <div className="relative flex">
          <SideBar />
          <button
            type="button"
            aria-label="Hide sidebar"
            className="absolute top-[269px] left-0 flex h-[50px] w-1 items-center justify-center bg-[#8b8b8b]"
          >
            <svg viewBox="0 0 4 6" className="h-[6px] w-1" aria-hidden="true">
              <path d="M0 1l3.500 2L0 5z" fill="#fff" />
            </svg>
          </button>
        </div>
      </div>
      <StatusBar />
    </div>
  );
};

export default App;
